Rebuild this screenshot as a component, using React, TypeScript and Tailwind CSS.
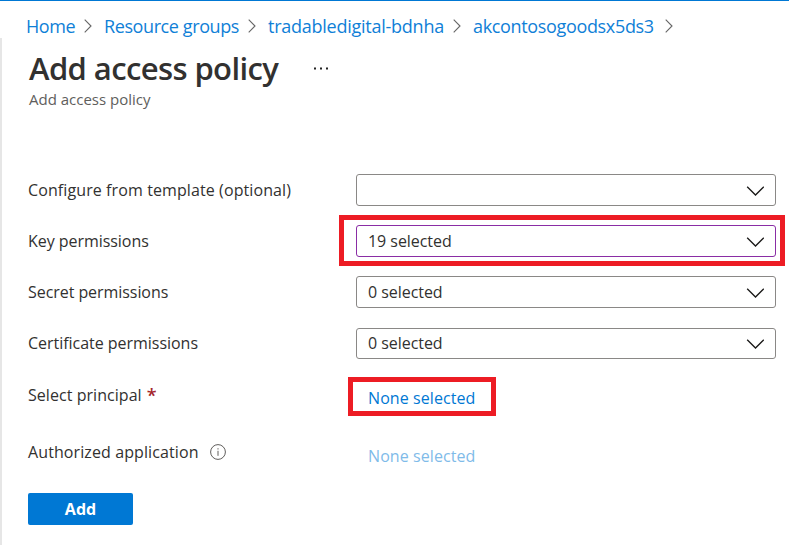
import React from "react";

function Crumb({ label, width, tracking }: { label: string; width: string; tracking: string }) {
  return (
    <li className={`flex shrink-0 items-center ${width}`}>
      <a className={`grow text-[18px] leading-6 text-[#0f80d7] ${tracking}`}>{label}</a>
      <svg className="mr-3 -mt-px h-3.5 w-2 shrink-0" viewBox="0 0 8 14" fill="none" stroke="#666" strokeWidth="1.1">
        <path d="M.7.7 7 7 .7 13.3" />
      </svg>
    </li>
  );
}

function Select({ value, border, size, tracking }: { value: string; border: string; size: string; tracking: string }) {
  return (
    <div className={`flex w-[420px] items-center justify-between rounded-[3px] border bg-white pl-[11px] pr-[11px] ${border} ${size}`}>
      <span className={tracking}>{value}</span>
      <svg className="mt-px h-[10px] w-[18px]" viewBox="0 0 18 10" fill="none" stroke="#1b1a19" strokeWidth="1.35">
        <path d="M1.2.8 9.5 9 17.8.8" />
      </svg>
    </div>
  );
}

export default function App() {
  return (
    <div className="flex h-[545px] w-[789px] flex-col overflow-hidden border-t border-[#0078d4] bg-white font-['Open_Sans','Noto_Sans',sans-serif] text-[16px] leading-6 text-[#323130]">
      <nav className="h-[37px] shrink-0 pl-[26px] pt-[13px]">
        <ol className="flex">
          <Crumb label="Home" width="w-[78px]" tracking="tracking-[-0.4px]" />
          <Crumb label="Resource groups" width="w-[164px]" tracking="tracking-[-0.4px]" />
          <Crumb label="tradabledigital-bdnha" width="w-[205px]" tracking="tracking-[-0.25px]" />
          <Crumb label="akcontosogoodsx5ds3" width="w-[212px]" tracking="tracking-[-0.34px]" />
        </ol>
      </nav>
      <main className="flex grow flex-col border-l-2 border-[#e6e6e6] pl-[26px]">
        <header className="h-[136px] shrink-0">
          <div className="flex h-[49px] items-center pt-3">
            <h1 className="-mt-0.5 w-[285px] whitespace-nowrap pl-px text-[31px] font-semibold leading-10 tracking-[-0.6px]">Add access policy</h1>
            <svg className="h-[3px] w-4" viewBox="0 0 16 3" fill="#222">
              <path d="M1 .5h2v2H1zM7 .5h2v2H7zM13 .5h2v2h-2z" />
            </svg>
          </div>
          <p className="pl-px text-[15px] leading-6 text-[#605e5c]">Add access policy</p>
        </header>
        <form className="flex flex-col">
          <div className="flex h-8 items-center">
            <label className="w-[328px] tracking-[0.1px]">Configure from template (optional)</label>
            <Select value="" border="border-[#8a8886]" size="h-8" tracking="" />
          </div>
          <div className="mt-[9px] flex h-[51px] items-center">
            <label className="w-[311px] tracking-[-0.05px]">Key permissions</label>
            <div className="flex h-[51px] w-[446px] items-center border-[5px] border-[#ed1c24] pl-3">
              <Select value="19 selected" border="border-[#8a2da5]" size="h-8 mt-px" tracking="tracking-[-0.05px]" />
            </div>
          </div>
          <div className="mt-[10px] flex h-8 items-center">
            <label className="w-[328px] tracking-[-0.06px]">Secret permissions</label>
            <Select value="0 selected" border="border-[#8a8886]" size="h-8" tracking="tracking-[-0.05px]" />
          </div>
          <div className="mt-5 flex h-[31px] items-center">
            <label className="w-[328px] pb-[2px] tracking-[-0.03px]">Certificate permissions</label>
            <Select value="0 selected" border="border-[#8a8886]" size="h-[31px]" tracking="pb-[2px] tracking-[-0.05px]" />
          </div>
          <div className="mt-[18px] flex h-[39px] items-center">
            <label className="flex w-80 items-center gap-[5px] pb-[3px]">
              <span className="tracking-[0.05px]">Select principal</span>
              <span className="text-[18px] font-semibold text-[#a4262c]">*</span>
            </label>
            <a className="flex h-[39px] w-[148px] items-center border-[5px] border-[#ed1c24] pl-[15px] pt-0.5 tracking-[0.08px] text-[#0078d4]">None selected</a>
          </div>
          <div className="mt-[22px] flex h-8 items-center">
            <label className="flex w-[340px] items-center pb-1">
              <span className="w-[182px] tracking-[0.1px]">Authorized application</span>
              <svg className="h-4 w-4" viewBox="0 0 16 16" fill="none" stroke="#605e5c">
                <circle cx="8" cy="8" r="7.4" />
                <path d="M8 4.2v1.3M8 6.8v5" />
              </svg>
            </label>
            <a className="pt-1 tracking-[0.08px] text-[#7fbbe9]">None selected</a>
          </div>
          <button type="button" className="mt-[23px] h-8 w-[105px] rounded-[2px] bg-[#0078d4] font-bold text-white">Add</button>
        </form>
      </main>
    </div>
  );
}
